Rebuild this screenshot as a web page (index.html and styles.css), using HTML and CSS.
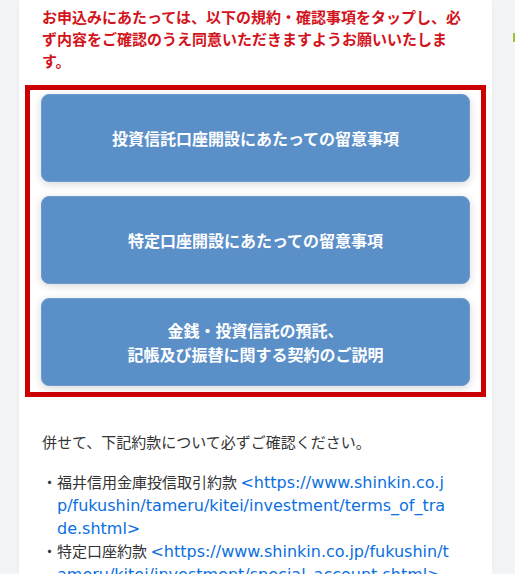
FILE: index.html
```html
<!DOCTYPE html>
<html lang="ja">
<head>
<meta charset="utf-8">
<title>規約・確認事項</title>
<link rel="stylesheet" href="styles.css">
</head>
<body>
<div class="page">
  <main class="panel">
    <p class="notice">お申込みにあたっては、以下の規約・確認事項をタップし、必ず内容をご確認のうえ同意いただきますようお願いいたします。</p>

    <div class="terms-box">
      <a class="term-btn" href="#">投資信託口座開設にあたっての留意事項</a>
      <a class="term-btn" href="#">特定口座開設にあたっての留意事項</a>
      <a class="term-btn" href="#">金銭・投資信託の預託、<br>記帳及び振替に関する契約のご説明</a>
    </div>

    <p class="lead">併せて、下記約款について必ずご確認ください。</p>

    <ul class="docs">
      <li>福井信用金庫投信取引約款 <a href="#">&lt;https://www.shinkin.co.jp/fukushin/tameru/kitei/investment/terms_of_trade.shtml&gt;</a></li>
      <li>特定口座約款 <a href="#">&lt;https://www.shinkin.co.jp/fukushin/tameru/kitei/investment/special_account.shtml&gt;</a></li>
    </ul>
  </main>
  <div class="side"><span class="side-mark"></span></div>
</div>
</body>
</html>
```

FILE: styles.css
```css
html, body {
  margin: 0;
  padding: 0;
}

body {
  background: #f3f4f5;
  font-family: "Noto Sans CJK JP", "Noto Sans", sans-serif;
  color: #333;
  overflow: hidden;
}

.page {
  display: flex;
  height: 574px;
  overflow: hidden;
}

.panel {
  margin-left: 19px;
  width: 473px;
  flex: none;
  box-sizing: border-box;
  background: #fff;
  padding: 6px 6px 0;
  box-shadow: 0 0 6px rgba(0, 0, 0, 0.04);
}

.side {
  flex: 1;
  position: relative;
}

.side-mark {
  position: absolute;
  right: 0;
  top: 33px;
  width: 2px;
  height: 9px;
  background: #9cc43a;
}

.notice {
  margin: 0;
  padding: 0 14px 0 17px;
  font-size: 15px;
  line-height: 22px;
  font-weight: 700;
  color: #d2141c;
}

.terms-box {
  margin-top: 13px;
  border: 5px solid #cc0000;
  padding: 4px 11px 6px;
  display: flex;
  flex-direction: column;
  gap: 14px;
}

.term-btn {
  display: flex;
  align-items: center;
  justify-content: center;
  height: 88px;
  box-sizing: border-box;
  background: #5b8fc8;
  border: 1px solid #6c9bd0;
  border-radius: 8px;
  box-shadow: 0 2px 8px rgba(0, 0, 0, 0.16);
  color: #fff;
  text-decoration: none;
  font-size: 16px;
  font-weight: 700;
  line-height: 24px;
  text-align: center;
}

.lead {
  margin: 34px 0 0;
  padding: 0 14px 0 17px;
  font-size: 15px;
  line-height: 22px;
  color: #333;
}

.docs {
  list-style: none;
  margin: 18px 0 0;
  padding: 0 32px 0 32px;
  font-size: 15px;
  line-height: 22px;
  color: #333;
}

.docs li {
  position: relative;
  word-break: break-all;
}

.docs li::before {
  content: "・";
  position: absolute;
  left: -15px;
}

.docs a {
  color: #0b6fe0;
  text-decoration: none;
  font-family: "DejaVu Sans", "Noto Sans", sans-serif;
  font-size: 16px;
}
```
